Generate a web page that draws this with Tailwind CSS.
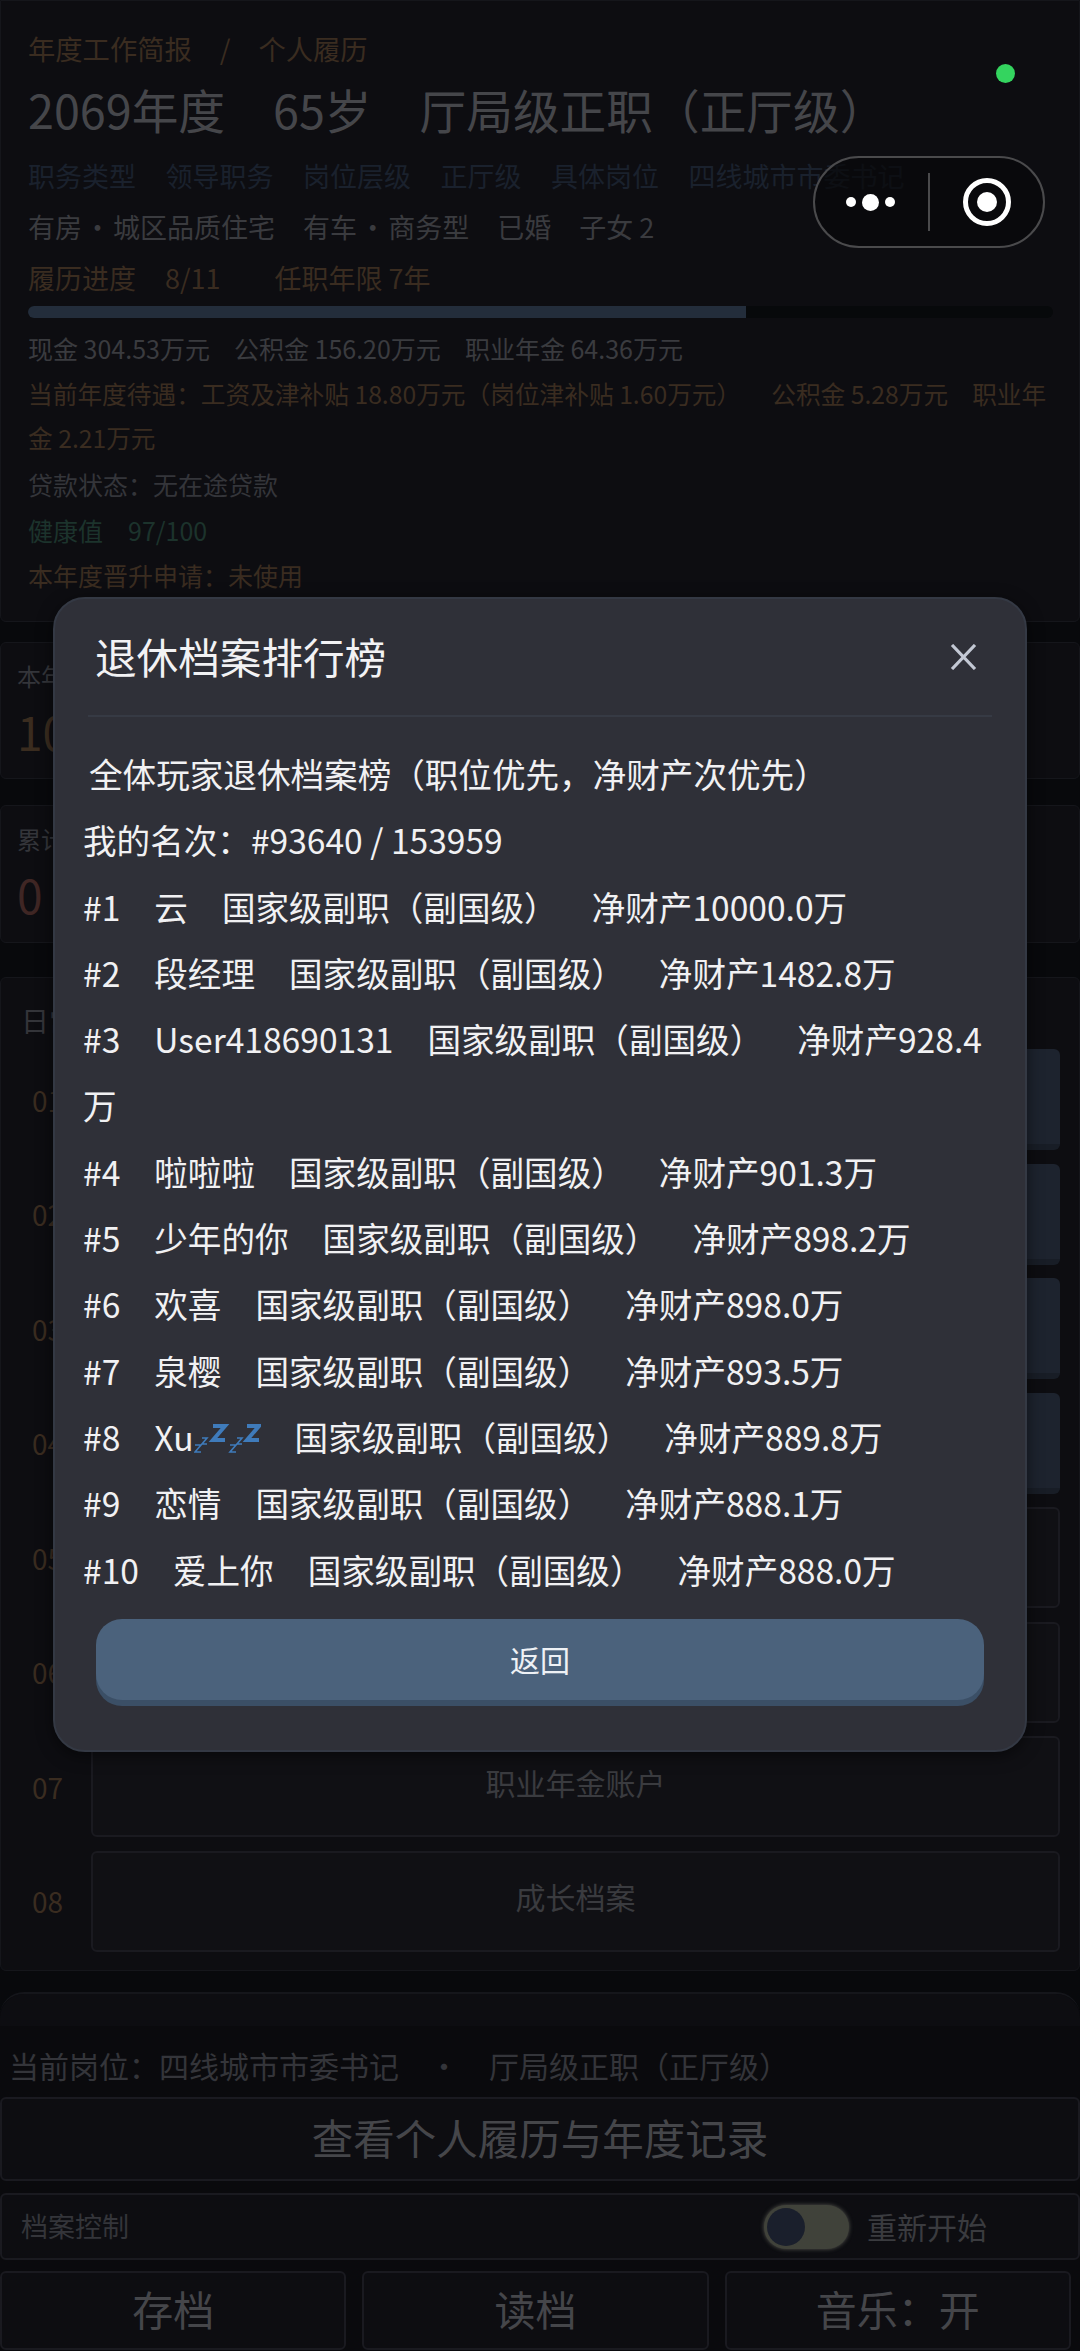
<!DOCTYPE html>
<html lang="zh-CN">
<head>
    <meta charset="UTF-8">
    <meta name="viewport" content="width=device-width, initial-scale=1.0">
    <title>退休档案排行榜</title>
    <script src="https://cdn.jsdelivr.net/npm/@tailwindcss/browser@4"></script>
</head>
<body class="bg-[#08090c] font-['Noto_Sans_CJK_SC',sans-serif]">
<div class="relative w-[1080px] h-[2351px] overflow-hidden">

    <!-- page behind the modal -->
    <div class="flex flex-col h-[2351px]">
        <div class="h-[622px] shrink-0 bg-[#0d0d11] border border-[#15161b] rounded-b-md pt-[26px] px-[27px]">
            <div class="flex gap-[28px] text-[27.3px] leading-[42px] text-[#3a2c20]"><span>年度工作简报</span><span>/</span><span>个人履历</span></div>
            <div class="flex gap-[48px] text-[46.7px] leading-[72px] mt-[4px] text-[#45464a]"><span>2069年度</span><span>65岁</span><span>厅局级正职（正厅级）</span></div>
            <div class="flex gap-[29.5px] text-[27px] leading-[40px] mt-[11px] text-[#1a212d]"><span>职务类型</span><span>领导职务</span><span>岗位层级</span><span>正厅级</span><span>具体岗位</span><span>四线城市市委书记</span></div>
            <div class="flex gap-[28px] text-[27px] leading-[40px] mt-[11px] text-[#3a3b3f]"><span class="[word-spacing:-4px]">有房 · 城区品质住宅</span><span class="[word-spacing:-4px]">有车 · 商务型</span><span>已婚</span><span>子女 2</span></div>
            <div class="flex text-[27px] leading-[40px] mt-[11px] text-[#3a2c20]"><span class="mr-[29px]">履历进度</span><span class="mr-[54px]">8/11</span><span>任职年限 7年</span></div>
            <div class="h-[12px] mt-[8px] mr-[-1px] rounded-full bg-[#07090b] overflow-hidden"><div class="h-full bg-[#232d3b]" style="width:70%"></div></div>
            <div class="flex gap-[24px] text-[25px] leading-[38px] mt-[11px] text-[#3a3b3f]"><span>现金 304.53万元</span><span>公积金 156.20万元</span><span>职业年金 64.36万元</span></div>
            <div class="text-[24.7px] leading-[44px] mt-[4px] text-[#3a2c20]">当前年度待遇：工资及津补贴 18.80万元（岗位津补贴 1.60万元）<span class="ml-[30px]">公积金 5.28万元</span><span class="ml-[24px]">职业年金 2.21万元</span></div>
            <div class="text-[25px] leading-[38px] mt-[6px] text-[#34353a]">贷款状态：无在途贷款</div>
            <div class="flex gap-[25px] text-[25px] leading-[38px] mt-[8px] text-[#1c332c]"><span>健康值</span><span>97/100</span></div>
            <div class="text-[25px] leading-[38px] mt-[7px] text-[#3a2c20]">本年度晋升申请：未使用</div>
        </div>

        <div class="h-[137px] shrink-0 mt-[20px] bg-[#0d0d11] border border-[#15161b] rounded-md pl-[16px] pt-[15px]">
            <div class="text-[24px] leading-[36px] text-[#34353a]">本年度</div>
            <div class="text-[46px] leading-[60px] mt-[7px] text-[#3a2c1f]">10</div>
        </div>
        <div class="h-[138px] shrink-0 mt-[26px] bg-[#0d0d11] border border-[#15161b] rounded-md pl-[16px] pt-[15px]">
            <div class="text-[24px] leading-[36px] text-[#34353a]">累计</div>
            <div class="text-[46px] leading-[60px] mt-[7px] text-[#3f2624]">0</div>
        </div>

        <div class="h-[994px] shrink-0 mt-[34px] bg-[#0d0d11] border border-[#15161b] rounded-md pl-[20px] pr-[19px] pt-[21px]">
            <div class="text-[28px] leading-[42px] text-[#34353a]">日常</div>
            <div class="flex flex-col gap-[13.5px] mt-[8px]">
                <div class="flex items-center h-[101px]"><span class="w-[70px] shrink-0 pl-[11px] text-[28px] text-[#3a2c20]">01</span><div class="flex-1 h-full rounded-md bg-[#1d232e] border-b-[6px] border-[#181d26]"></div></div>
                <div class="flex items-center h-[101px]"><span class="w-[70px] shrink-0 pl-[11px] text-[28px] text-[#3a2c20]">02</span><div class="flex-1 h-full rounded-md bg-[#1d232e] border-b-[6px] border-[#181d26]"></div></div>
                <div class="flex items-center h-[101px]"><span class="w-[70px] shrink-0 pl-[11px] text-[28px] text-[#3a2c20]">03</span><div class="flex-1 h-full rounded-md bg-[#1d232e] border-b-[6px] border-[#181d26]"></div></div>
                <div class="flex items-center h-[101px]"><span class="w-[70px] shrink-0 pl-[11px] text-[28px] text-[#3a2c20]">04</span><div class="flex-1 h-full rounded-md bg-[#1d232e] border-b-[6px] border-[#181d26]"></div></div>
                <div class="flex items-center h-[101px]"><span class="w-[70px] shrink-0 pl-[11px] text-[28px] text-[#3a2c20]">05</span><div class="flex-1 h-full rounded-md bg-[#101014] border-2 border-[#1a1a20]"></div></div>
                <div class="flex items-center h-[101px]"><span class="w-[70px] shrink-0 pl-[11px] text-[28px] text-[#3a2c20]">06</span><div class="flex-1 h-full rounded-md bg-[#101014] border-2 border-[#1a1a20]"></div></div>
                <div class="flex items-center h-[101px]"><span class="w-[70px] shrink-0 pl-[11px] text-[28px] text-[#3a2c20]">07</span><div class="flex-1 h-full rounded-md bg-[#101014] border-2 border-[#1a1a20] flex items-center justify-center pb-[9px] text-[30px] text-[#3a3b3f]">职业年金账户</div></div>
                <div class="flex items-center h-[101px]"><span class="w-[70px] shrink-0 pl-[11px] text-[28px] text-[#3a2c20]">08</span><div class="flex-1 h-full rounded-md bg-[#101014] border-2 border-[#1a1a20] flex items-center justify-center pb-[9px] text-[30px] text-[#3a3b3f]">成长档案</div></div>
            </div>
        </div>

        <!-- bottom dock -->
        <div class="h-[359px] shrink-0 mt-[21px] bg-[#0a0a0d] border-t-2 border-[#15161b] rounded-t-[24px] flex flex-col">
            <div class="h-[32px] shrink-0 bg-[#0d0d11] rounded-t-[24px]"></div>
            <div class="flex h-[71px] shrink-0 pl-[9px] pt-[18px] text-[30px] leading-[42px] text-[#34353a]"><span>当前岗位：四线城市市委书记</span><span class="ml-[30px]">·</span><span class="ml-[30px]">厅局级正职（正厅级）</span></div>
            <div class="h-[84px] shrink-0 flex items-center justify-center pb-[3px] bg-[#0d0d11] border-2 border-[#1a1a20] rounded-md text-[41.5px] text-[#45464a]">查看个人履历与年度记录</div>
            <div class="h-[67px] shrink-0 mt-[12px] flex items-center bg-[#0d0d11] border-2 border-[#1a1a20] rounded-md pl-[19px] text-[27px] text-[#34353a]">
                <span>档案控制</span>
                <div class="ml-[635px] w-[85px] h-[44px] rounded-full bg-[#40423a] flex items-center pl-[3px] shadow-[0_0_4px_#55564f]"><span class="w-[38px] h-[38px] rounded-full bg-[#1a1f2c]"></span></div>
                <span class="ml-[18px] text-[30px] text-[#3a3b3f]">重新开始</span>
            </div>
            <div class="grid grid-cols-3 gap-[16px] h-[79px] mt-[11px] pr-[9px]">
                <div class="flex items-center justify-center pb-[3px] bg-[#0d0d11] border-2 border-[#1a1a20] rounded-md text-[41px] text-[#45464a]">存档</div>
                <div class="flex items-center justify-center pb-[3px] bg-[#0d0d11] border-2 border-[#1a1a20] rounded-md text-[41px] text-[#45464a]">读档</div>
                <div class="flex items-center justify-center pb-[3px] bg-[#0d0d11] border-2 border-[#1a1a20] rounded-md text-[41px] text-[#45464a]">音乐：开</div>
            </div>
        </div>
    </div>

    <!-- status dot and capsule over the page -->
    <div class="absolute left-[996px] top-[64px] w-[19px] h-[19px] rounded-full bg-[#34d45f]"></div>
    <div class="absolute left-[813px] top-[156px] w-[232px] h-[92px] rounded-full border-2 border-[#4a4a4c] bg-[#08080a]/70 flex items-center">
        <div class="w-[113px] pr-[3px] flex items-center justify-center gap-[6px]">
            <span class="w-[10px] h-[10px] rounded-full bg-white"></span>
            <span class="w-[17px] h-[17px] rounded-full bg-white"></span>
            <span class="w-[10px] h-[10px] rounded-full bg-white"></span>
        </div>
        <div class="w-[2px] h-[58px] bg-[#4a4a4c]"></div>
        <div class="flex-1 flex items-center justify-center">
            <div class="w-[48px] h-[48px] rounded-full border-[5px] border-white flex items-center justify-center"><span class="w-[20px] h-[20px] rounded-full bg-white"></span></div>
        </div>
    </div>

    <!-- modal -->
    <div class="absolute left-[53px] top-[597px] w-[974px] h-[1155px] rounded-[32px] bg-[#2f3038] border-2 border-[#343944] shadow-[0_4px_16px_rgba(0,0,0,0.5)] flex flex-col">
        <div class="flex items-center justify-between h-[86px] mt-[14px] mx-[8px] pl-[32px] pr-[40px]">
            <span class="text-[41.6px] text-[#f2f2f4]">退休档案排行榜</span>
            <svg width="27" height="26" viewBox="0 0 27 26" class="mt-[2px]"><path d="M2 1 L25 25 M25 1 L2 25" stroke="#c3c8d4" stroke-width="3.2" fill="none"/></svg>
        </div>
        <div class="h-[2px] mt-[16px] mx-[33px] bg-[#363a44]"></div>
        <div class="pl-[28px] pr-[30px] mt-[24px] text-[33.6px] leading-[66.3px] text-[#f1f1f3]">
            <div class="pl-[6px]">全体玩家退休档案榜（职位优先，净财产次优先）</div>
            <div>我的名次：#93640 / 153959</div>
            <div class="flex gap-[34px]"><span>#1</span><span>云</span><span>国家级副职（副国级）</span><span>净财产10000.0万</span></div>
            <div class="flex gap-[34px]"><span>#2</span><span>段经理</span><span>国家级副职（副国级）</span><span>净财产1482.8万</span></div>
            <div><span class="mr-[34px]">#3</span><span class="mr-[34px]">User418690131</span><span class="mr-[34px]">国家级副职（副国级）</span><span>净财产928.4万</span></div>
            <div class="flex gap-[34px]"><span>#4</span><span>啦啦啦</span><span>国家级副职（副国级）</span><span>净财产901.3万</span></div>
            <div class="flex gap-[34px]"><span>#5</span><span>少年的你</span><span>国家级副职（副国级）</span><span>净财产898.2万</span></div>
            <div class="flex gap-[34px]"><span>#6</span><span>欢喜</span><span>国家级副职（副国级）</span><span>净财产898.0万</span></div>
            <div class="flex gap-[34px]"><span>#7</span><span>泉樱</span><span>国家级副职（副国级）</span><span>净财产893.5万</span></div>
            <div class="flex gap-[34px]"><span>#8</span>
                <span class="flex items-center">Xu<svg width="67" height="30" viewBox="0 0 67 30" class="mt-[4px]" fill="none" stroke="#3f7bbb">
                    <path d="M1 21 H7 L1 28 H7 M8 14 H13 L8 20 H13" stroke-width="1.6"/>
                    <path d="M19 2 H31 L19 16 H31" stroke-width="4"/>
                    <path d="M36 21 H42 L36 28 H42 M43 14 H48 L43 20 H48" stroke-width="1.6"/>
                    <path d="M53 2 H65 L53 16 H65" stroke-width="4"/>
                </svg></span>
                <span>国家级副职（副国级）</span><span>净财产889.8万</span></div>
            <div class="flex gap-[34px]"><span>#9</span><span>恋情</span><span>国家级副职（副国级）</span><span>净财产888.1万</span></div>
            <div class="flex gap-[34px]"><span>#10</span><span>爱上你</span><span>国家级副职（副国级）</span><span>净财产888.0万</span></div>
        </div>
        <div class="ml-[41px] mr-[41px] mt-[16px] h-[81px] rounded-[26px] bg-[#4b627c] shadow-[0_6px_0_#3b4f66] flex items-center justify-center text-[30px] text-[#eef1f5]">返回</div>
    </div>
</div>
</body>
</html>
